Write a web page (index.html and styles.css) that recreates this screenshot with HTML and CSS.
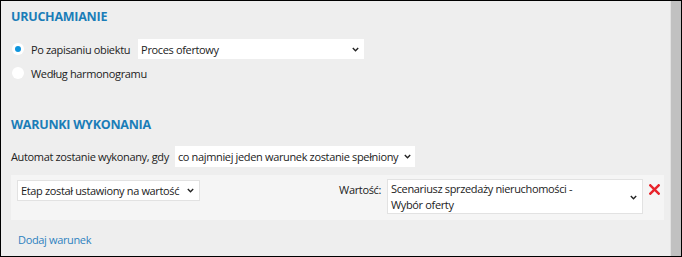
FILE: index.html
```html
<!DOCTYPE html>
<html lang="pl">
<head>
  <meta charset="UTF-8">
  <title>Automat</title>
  <link rel="stylesheet" href="styles.css">
</head>
<body>
  <div class="frame">
    <div class="content">
      <!-- Uruchamianie -->
      <h2 class="section-title">URUCHAMIANIE</h2>
      <div class="radio-row">
        <span class="radio checked"></span>
        <span class="label">Po zapisaniu obiektu</span>
        <div class="select select-proces">
          <span>Proces ofertowy</span>
          <svg class="chevron" width="7" height="5" viewBox="0 0 7 5"><path d="M0.8 1 L3.5 3.7 L6.2 1" fill="none" stroke="#222" stroke-width="1.4"/></svg>
        </div>
      </div>
      <div class="radio-row second">
        <span class="radio"></span>
        <span class="label">Według harmonogramu</span>
      </div>

      <!-- Warunki wykonania -->
      <h2 class="section-title spaced">WARUNKI WYKONANIA</h2>
      <div class="mode-row">
        <span class="label">Automat zostanie wykonany, gdy</span>
        <div class="select select-mode">
          <span>co najmniej jeden warunek zostanie spełniony</span>
          <svg class="chevron" width="7" height="5" viewBox="0 0 7 5"><path d="M0.8 1 L3.5 3.7 L6.2 1" fill="none" stroke="#222" stroke-width="1.4"/></svg>
        </div>
      </div>

      <div class="condition">
        <div class="select select-etap">
          <span>Etap został ustawiony na wartość</span>
          <svg class="chevron" width="7" height="5" viewBox="0 0 7 5"><path d="M0.8 1 L3.5 3.7 L6.2 1" fill="none" stroke="#222" stroke-width="1.4"/></svg>
        </div>
        <div class="value-group">
          <span class="label">Wartość:</span>
          <div class="select select-value">
            <span>Scenariusz sprzedaży nieruchomości -<br>Wybór oferty</span>
            <svg class="chevron" width="7" height="5" viewBox="0 0 7 5"><path d="M0.8 1 L3.5 3.7 L6.2 1" fill="none" stroke="#222" stroke-width="1.4"/></svg>
          </div>
          <svg class="remove" width="11" height="11" viewBox="0 0 11 11">
            <path d="M1.3 1.3 L9.7 9.7 M9.7 1.3 L1.3 9.7" stroke="#e8232b" stroke-width="2.4" stroke-linecap="square"/>
          </svg>
        </div>
      </div>

      <a class="add-link" href="#">Dodaj warunek</a>
    </div>
    <div class="scrollbar"></div>
  </div>
</body>
</html>
```

FILE: styles.css
```css
body {
  margin: 0;
  font-family: "Open Sans", "Noto Sans", sans-serif;
  font-size: 11px;
  letter-spacing: -0.35px;
  color: #222;
}

.frame {
  width: 680px;
  height: 255px;
  border: 1px solid #000;
  background-color: #eeeeee;
  display: flex;
  overflow: hidden;
}

.content {
  flex-grow: 1;
  padding: 6px 6px 0 10px;
  white-space: nowrap;
}

.scrollbar {
  width: 10px;
  background-color: #c1c1c1;
  border-left: 1px solid #e2e2e2;
}

.section-title {
  margin: 0;
  font-size: 12.5px;
  letter-spacing: -0.25px;
  font-weight: bold;
  color: #1a7db8;
  height: 20px;
  line-height: 20px;
}

.section-title.spaced {
  margin-top: 32px;
}

.radio-row {
  display: flex;
  align-items: center;
  margin-top: 12px;
  height: 20px;
}

.radio-row.second {
  margin-top: 4px;
}

.radio {
  flex-shrink: 0;
  width: 12px;
  height: 12px;
  border-radius: 50%;
  background-color: white;
  margin: 0 7px 0 1px;
  position: relative;
}

.radio.checked::after {
  content: "";
  position: absolute;
  left: 3px;
  top: 3px;
  width: 6px;
  height: 6px;
  border-radius: 50%;
  background-color: #0e95dd;
}

.select {
  background-color: white;
  display: flex;
  align-items: center;
  justify-content: space-between;
  padding: 0 5px 0 3px;
  height: 20px;
  box-sizing: border-box;
  flex-shrink: 0;
}

.chevron {
  flex-shrink: 0;
  margin-left: 4px;
}

.select-proces {
  width: 226px;
  margin-left: 8px;
}

.mode-row {
  display: flex;
  align-items: center;
  margin-top: 11px;
  height: 21px;
}

.select-mode {
  height: 21px;
  margin-left: 6px;
  width: 240px;
  padding-right: 4px;
}

.condition {
  background-color: #f5f5f5;
  margin-top: 8px;
  height: 45px;
  padding: 5px 4px 0 6px;
  box-sizing: border-box;
  display: flex;
  justify-content: space-between;
  align-items: flex-start;
}

.select-etap {
  width: 183px;
  border: 1px solid #e2e2e2;
  height: 21px;
}

.value-group {
  display: flex;
  align-items: flex-start;
  margin-top: -1px;
}

.value-group .label {
  margin-top: 3px;
  margin-right: 6px;
}

.select-value {
  width: 256px;
  height: 35px;
  border: 1px solid #e2e2e2;
  align-items: flex-start;
  line-height: 16px;
  padding-top: 1px;
}

.select-value .chevron {
  margin-top: 14px;
}

.remove {
  margin: 5px 0 0 6px;
}

.add-link {
  display: block;
  margin: 12px 0 0 7px;
  color: #2e82c0;
  text-decoration: none;
}
```
